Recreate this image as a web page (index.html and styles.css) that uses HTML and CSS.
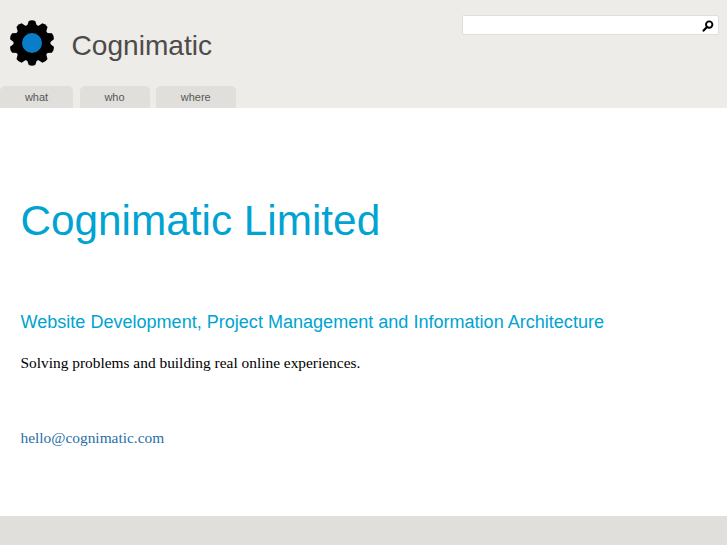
FILE: index.html
```html
<!DOCTYPE html>
<html lang="en">
<head>
<meta charset="utf-8">
<title>Cognimatic</title>
<link rel="stylesheet" href="styles.css">
</head>
<body>
<header class="header">
  <div class="top">
    <a class="brand" href="#">
      <svg class="gear" width="46" height="46" viewBox="-23 -23 46 46" aria-hidden="true">
        <circle r="18.5" fill="#000"/>
        <g fill="#000">
          <path d="M-5 -17 L-3.2 -22 Q0 -23.4 3.2 -22 L5 -17 Z"/>
          <path transform="rotate(36)" d="M-5 -17 L-3.2 -22 Q0 -23.4 3.2 -22 L5 -17 Z"/>
          <path transform="rotate(72)" d="M-5 -17 L-3.2 -22 Q0 -23.4 3.2 -22 L5 -17 Z"/>
          <path transform="rotate(108)" d="M-5 -17 L-3.2 -22 Q0 -23.4 3.2 -22 L5 -17 Z"/>
          <path transform="rotate(144)" d="M-5 -17 L-3.2 -22 Q0 -23.4 3.2 -22 L5 -17 Z"/>
          <path transform="rotate(180)" d="M-5 -17 L-3.2 -22 Q0 -23.4 3.2 -22 L5 -17 Z"/>
          <path transform="rotate(216)" d="M-5 -17 L-3.2 -22 Q0 -23.4 3.2 -22 L5 -17 Z"/>
          <path transform="rotate(252)" d="M-5 -17 L-3.2 -22 Q0 -23.4 3.2 -22 L5 -17 Z"/>
          <path transform="rotate(288)" d="M-5 -17 L-3.2 -22 Q0 -23.4 3.2 -22 L5 -17 Z"/>
          <path transform="rotate(324)" d="M-5 -17 L-3.2 -22 Q0 -23.4 3.2 -22 L5 -17 Z"/>
        </g>
        <circle r="10" fill="#0a7dc8"/>
      </svg>
      <span class="brand-name">Cognimatic</span>
    </a>
    <form class="search">
      <svg class="search-icon" width="12" height="12" viewBox="0 0 12 12" aria-hidden="true">
        <circle cx="7.2" cy="4.6" r="3.2" fill="none" stroke="#000" stroke-width="1.9"/>
        <path d="M5 7 L1.6 10.6" stroke="#000" stroke-width="2.2" stroke-linecap="round"/>
      </svg>
    </form>
  </div>
  <nav class="tabs">
    <a class="tab tab-what" href="#">what</a>
    <a class="tab tab-who" href="#">who</a>
    <a class="tab tab-where" href="#">where</a>
  </nav>
</header>
<main class="main">
  <h1 class="title">Cognimatic Limited</h1>
  <h2 class="subtitle">Website Development, Project Management and Information Architecture</h2>
  <p class="lead">Solving problems and building real online experiences.</p>
  <p class="contact"><a href="#">hello@cognimatic.com</a></p>
</main>
<footer class="footer"></footer>
</body>
</html>
```
FILE: styles.css
```css
html, body { margin: 0; padding: 0; height: 100%; }
body {
  display: flex;
  flex-direction: column;
  height: 545px;
  overflow: hidden;
  background: #fff;
  font-family: "Liberation Sans", Arial, sans-serif;
}
.header { background: #edece9; height: 108px; display: flex; flex-direction: column; flex: none; }
.top { flex: 1; display: flex; justify-content: space-between; align-items: flex-start; }
.brand { display: flex; align-items: flex-start; text-decoration: none; margin: 20px 0 0 9px; height: 46px; }
.gear { display: block; }
.brand-name { margin: 3px 0 0 16.5px; font-size: 28.1px; line-height: 46px; color: #4d4b49; }
.search {
  box-sizing: border-box;
  width: 257px; height: 20px;
  margin: 15px 8px 0 0;
  background: #fff;
  border: 1px solid #e0dfdc;
  border-radius: 2px;
  display: flex; justify-content: flex-end; align-items: center;
  padding: 2px 4px 0 0;
}
.tabs { display: flex; gap: 6.5px; height: 22px; }
.tab {
  display: flex; align-items: center; justify-content: center;
  background: #e0dfdc;
  border-radius: 5px 5px 0 0;
  color: #595755;
  font-size: 11px;
  text-decoration: none;
}
.tab-what { width: 73px; }
.tab-who { width: 70px; }
.tab-where { width: 79.5px; }
.main { flex: 1; padding: 0 20.5px; }
.title { margin: 87px 0 0; font-size: 42.3px; line-height: 52px; font-weight: 400; color: #00a3d1; }
.subtitle { margin: 63px 0 0; font-size: 18.06px; line-height: 24px; font-weight: 400; color: #00a3d1; }
.lead { margin: 19px 0 0; font-family: "Liberation Serif", "Times New Roman", serif; font-size: 15.4px; line-height: 20px; color: #000; }
.contact { margin: 55px 0 0; font-family: "Liberation Serif", "Times New Roman", serif; font-size: 15.4px; line-height: 20px; }
.contact a { color: #1f6fa8; text-decoration: none; }
.footer { height: 29px; background: #e0dfdc; flex: none; }
```
